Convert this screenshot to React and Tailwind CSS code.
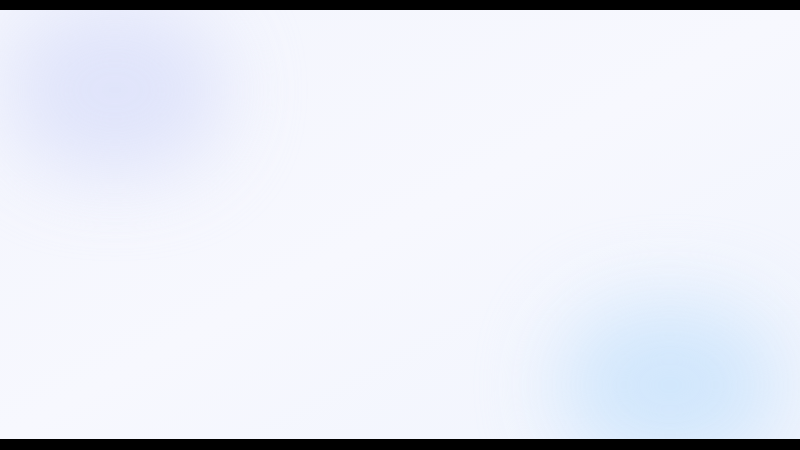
import React from 'react';

// Empty loading canvas with soft background glows
const App = () => (
  <div className="flex flex-col h-[450px] w-[800px] bg-black overflow-hidden">
    <div className="h-[10px] bg-black" />
    <div className="flex-1 relative overflow-hidden bg-gradient-to-br from-[#f3f5fd] via-[#f7f8fe] to-[#f0f4fd]">
      {/* Background decorations */}
      <div className="absolute left-[5px] top-[-5px] w-[220px] h-[170px] rounded-full bg-[#dbe0fa] blur-[40px] opacity-80" />
      <div className="absolute left-[560px] top-[295px] w-[220px] h-[160px] rounded-full bg-[#cde5fc] blur-[42px] opacity-90" />
    </div>
    <div className="h-[11px] bg-black" />
  </div>
);

export default App;
